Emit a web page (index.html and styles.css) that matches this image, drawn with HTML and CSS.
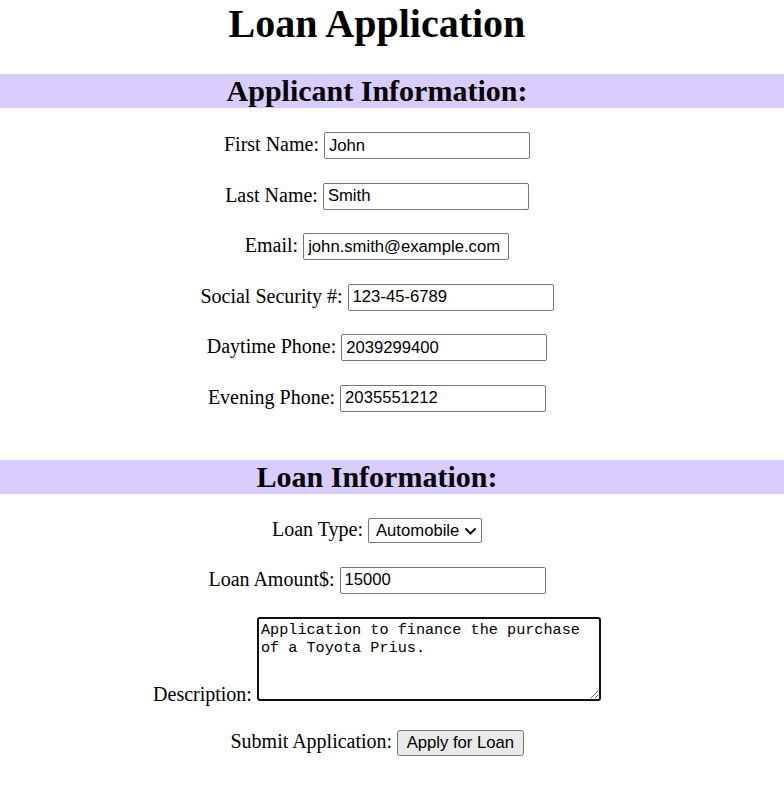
FILE: index.html
```html
<!DOCTYPE html>
<html lang="en">
<head>
<meta charset="utf-8">
<title>Loan Application</title>
<link rel="stylesheet" href="styles.css">
</head>
<body>
<h1 class="title">Loan Application</h1>
<form class="form">
  <h2 class="band">Applicant Information:</h2>
  <div class="fields">
    <div class="row">First Name: <input class="text" type="text" value="John"></div>
    <div class="row">Last Name: <input class="text" type="text" value="Smith"></div>
    <div class="row">Email: <input class="text" type="text" value="john.smith@example.com"></div>
    <div class="row">Social Security #: <input class="text" type="text" value="123-45-6789"></div>
    <div class="row">Daytime Phone: <input class="text" type="text" value="2039299400"></div>
    <div class="row">Evening Phone: <input class="text" type="text" value="2035551212"></div>
  </div>
  <h2 class="band">Loan Information:</h2>
  <div class="fields">
    <div class="row">Loan Type: <span class="select-wrap"><select class="select"><option>Automobile</option><option>Home</option><option>Personal</option></select><svg class="chev" width="11" height="7" viewBox="0 0 11 7" aria-hidden="true"><path d="M1 1 L5.5 5.5 L10 1" fill="none" stroke="#111" stroke-width="2" stroke-linecap="round" stroke-linejoin="round"/></svg></span></div>
    <div class="row">Loan Amount$: <input class="text" type="text" value="15000"></div>
    <div class="row">Description: <textarea class="area">Application to finance the purchase of a Toyota Prius.</textarea></div>
    <div class="row">Submit Application: <button class="btn" type="button">Apply for Loan</button></div>
  </div>
</form>
</body>
</html>
```

FILE: styles.css
```css
html, body {
  margin: 0;
  padding: 0;
  background: #ffffff;
}
body {
  font-family: "Liberation Serif", "Times New Roman", serif;
  font-size: 20px;
  color: #000;
}
.title {
  margin: 0 0 27px 0;
  padding-right: 30px;
  font-size: 40px;
  font-weight: bold;
  line-height: normal;
  text-align: center;
}
.form {
  margin: 0;
}
.band {
  margin: 0 0 24px 0;
  padding-right: 30px;
  background: #d9ccff;
  font-size: 30px;
  font-weight: bold;
  line-height: normal;
  text-align: center;
}
.fields + .band {
  margin-top: 25px;
}
.fields {
  display: flex;
  flex-direction: column;
  gap: 23.6px;
  padding-right: 30px;
  padding-bottom: 23px;
}
.row {
  text-align: center;
  line-height: normal;
}
.text {
  box-sizing: border-box;
  width: 206px;
  height: 27px;
  margin: 0;
  padding: 2px 4px;
  border: 1px solid #767676;
  border-radius: 2px;
  font-family: "Liberation Sans", Arial, sans-serif;
  font-size: 16.67px;
  color: #000;
  background: #fff;
  vertical-align: baseline;
}
.select-wrap {
  position: relative;
  display: inline-block;
}
.select {
  -webkit-appearance: none;
  appearance: none;
  box-sizing: border-box;
  width: 114px;
  height: 25px;
  margin: 0;
  padding: 0 20px 0 7px;
  font-family: "Liberation Sans", Arial, sans-serif;
  font-size: 16.67px;
  color: #000;
  background: #fff;
  border: 1px solid #767676;
  border-radius: 2px;
}
.chev {
  position: absolute;
  right: 6px;
  top: 10px;
  pointer-events: none;
}
.area {
  box-sizing: border-box;
  width: 344px;
  height: 84px;
  margin: 0;
  padding: 2px 2px;
  border: 2px solid #101010;
  border-radius: 3px;
  font-family: "Liberation Mono", "DejaVu Sans Mono", monospace;
  font-size: 15.2px;
  line-height: 18.3px;
  color: #000;
  background: #fff;
  vertical-align: baseline;
}
.btn {
  box-sizing: border-box;
  height: 26px;
  margin: 0;
  padding: 1px 8.5px;
  border: 1px solid #767676;
  border-radius: 3px;
  background: #e9e9e9;
  font-family: "Liberation Sans", Arial, sans-serif;
  font-size: 16.67px;
  color: #000;
}
```
